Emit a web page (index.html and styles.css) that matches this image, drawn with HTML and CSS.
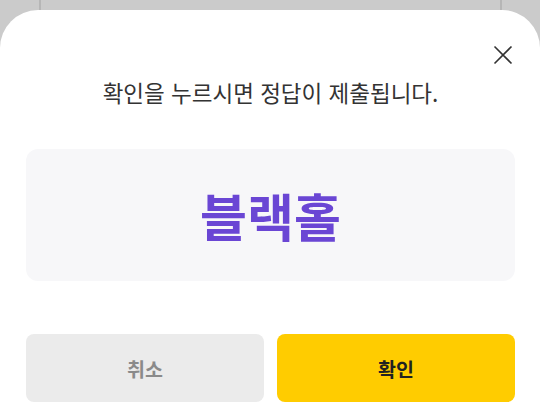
FILE: index.html
```html
<!DOCTYPE html>
<html lang="ko">
<head>
  <meta charset="UTF-8" />
  <meta name="viewport" content="width=device-width, initial-scale=1.0" />
  <title>정답 제출</title>
  <link rel="stylesheet" href="styles.css">
</head>
<body>

  <!-- 뒤에 깔린 화면 (어둡게) -->
  <div class="backdrop">
    <div class="under-card"></div>
  </div>

  <div class="sheet">
    <div class="sheet-top">
      <button class="close" aria-label="닫기">
        <svg width="20" height="20" viewBox="0 0 20 20">
          <path d="M1.5 1.5 L18.5 18.5 M18.5 1.5 L1.5 18.5" stroke="#333" stroke-width="1.6" fill="none" />
        </svg>
      </button>
    </div>

    <p class="message">확인을 누르시면 정답이 제출됩니다.</p>

    <div class="answer-box">
      <span class="answer">블랙홀</span>
    </div>

    <div class="buttons">
      <button class="btn btn-cancel">취소</button>
      <button class="btn btn-ok">확인</button>
    </div>
  </div>

</body>
</html>
```

FILE: styles.css
```css
html, body {
  margin: 0;
  padding: 0;
  height: 100%;
}

body {
  font-family: "Noto Sans CJK KR", "Noto Sans", sans-serif;
  background-color: #cbcbcb;
  overflow: hidden;
  position: relative;
}

.backdrop {
  height: 100%;
  padding: 0 38px 0 39px;
}

.under-card {
  height: 100%;
  border-left: 2px solid #b6b6b6;
  border-right: 2px solid #b6b6b6;
}

/* bottom sheet lies over the page */
.sheet {
  position: absolute;
  left: 0;
  right: 0;
  top: 10px;
  bottom: 0;
  background: #fff;
  border-radius: 38px 38px 0 0;
  padding: 0 25px 0 26px;
  box-sizing: border-box;
}

.sheet-top {
  display: flex;
  justify-content: flex-end;
  padding-top: 35px;
  padding-right: 2px;
}

.close {
  width: 20px;
  height: 20px;
  padding: 0;
  border: none;
  background: none;
  display: flex;
  cursor: pointer;
}

.message {
  margin: 12px 0 0;
  text-align: center;
  font-size: 22.5px;
  line-height: 30px;
  color: #333;
}

.answer-box {
  margin-top: 42px;
  height: 132px;
  background: #f7f7f9;
  border-radius: 12px;
  display: flex;
  align-items: center;
  justify-content: center;
}

.answer {
  font-size: 51px;
  font-weight: bold;
  color: #6a46d4;
  line-height: 1;
}

.buttons {
  margin-top: 53px;
  display: grid;
  grid-template-columns: 1fr 1fr;
  gap: 13px;
}

.btn {
  height: 68px;
  border: none;
  border-radius: 8px;
  font-family: inherit;
  font-size: 19.5px;
  font-weight: bold;
  cursor: pointer;
}

.btn-cancel {
  background: #ebebeb;
  color: #8a8a8a;
}

.btn-ok {
  background: #ffcc00;
  color: #222;
}
```
